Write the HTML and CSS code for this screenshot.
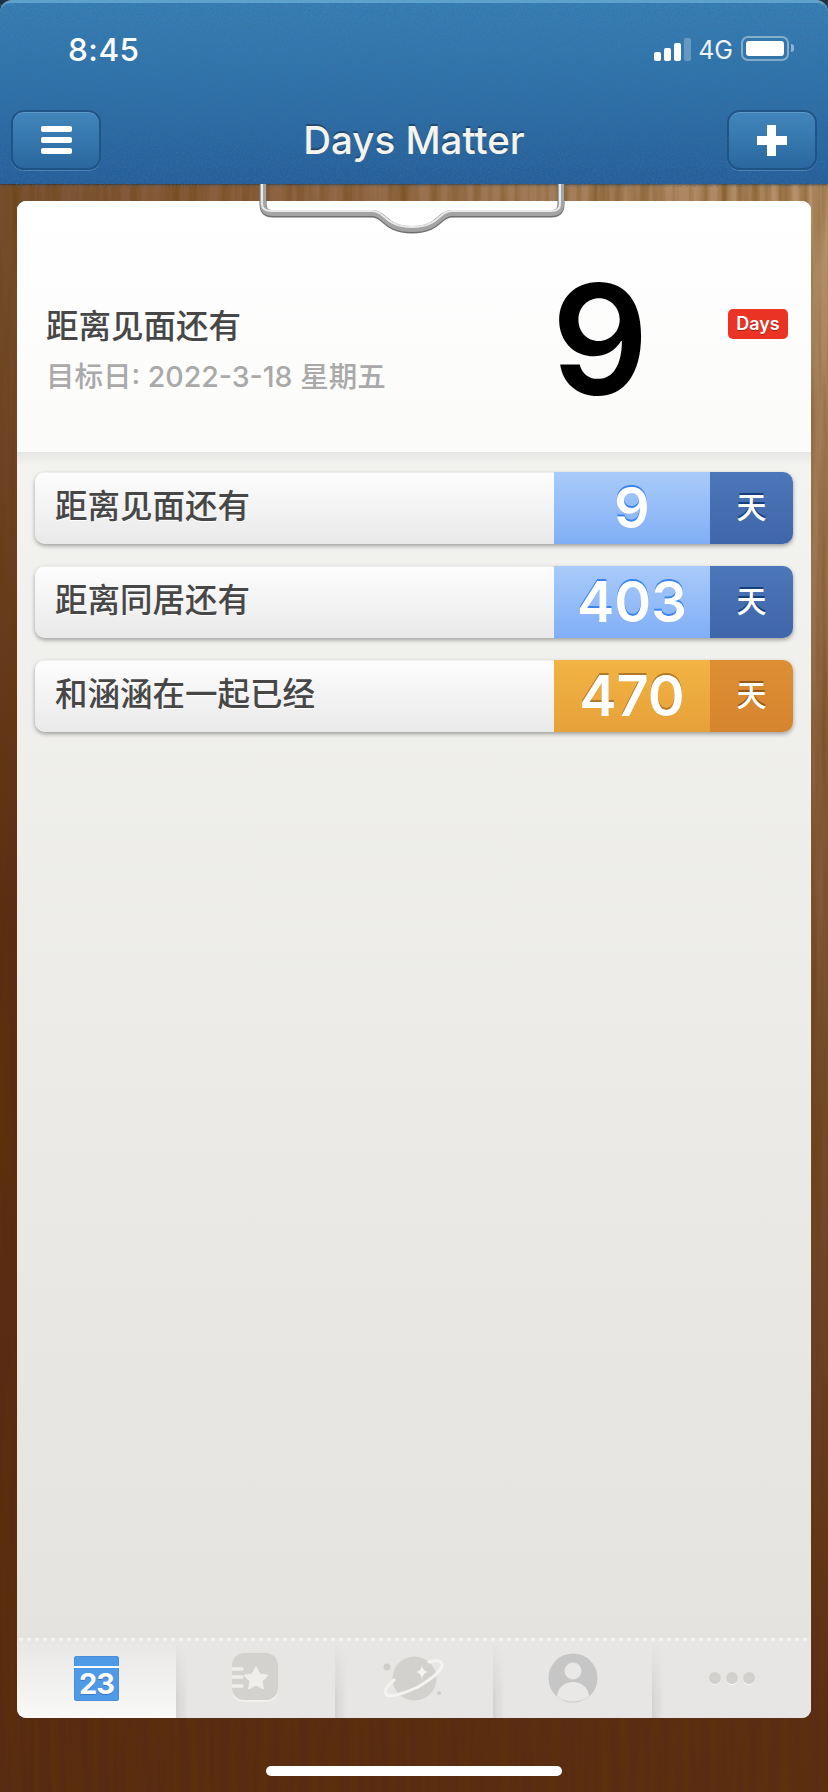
FILE: index.html
```html
<!DOCTYPE html>
<html lang="en">
<head>
  <meta charset="UTF-8">
  <title>Days Matter</title>
  <link rel="stylesheet" href="styles.css">
</head>
<body>
  <div class="screen">

    <!-- wood grain, sits behind everything -->
    <svg class="wood-grain" width="828" height="1792">
      <filter id="grain" x="0" y="0" width="100%" height="100%">
        <feTurbulence type="fractalNoise" baseFrequency="0.1 0.004" numOctaves="3" seed="8"/>
        <feColorMatrix type="matrix" values="0 0 0 0 0.12  0 0 0 0 0.04  0 0 0 0 0  1 0 0 0 -0.36"/>
      </filter>
      <rect width="828" height="1792" filter="url(#grain)"/>
    </svg>

    <header class="header">
      <svg class="header-noise" width="828" height="184">
        <filter id="noise" x="0" y="0" width="100%" height="100%">
          <feTurbulence type="fractalNoise" baseFrequency="0.55" numOctaves="2" seed="3"/>
          <feColorMatrix type="matrix" values="0 0 0 0 0.05  0 0 0 0 0.15  0 0 0 0 0.3  1.5 0 0 0 -0.62"/>
        </filter>
        <rect width="828" height="184" filter="url(#noise)"/>
      </svg>

      <div class="status">
        <span class="time">8:45</span>
        <div class="status-right">
          <div class="signal">
            <i class="bar bar-1"></i><i class="bar bar-2"></i><i class="bar bar-3"></i><i class="bar bar-4"></i>
          </div>
          <span class="network">4G</span>
          <div class="battery"><i class="battery-level"></i></div>
          <i class="battery-tip"></i>
        </div>
      </div>

      <nav class="nav">
        <button class="nav-btn">
          <span class="burger"><i></i><i></i><i></i></span>
        </button>
        <h1 class="nav-title">Days Matter</h1>
        <button class="nav-btn">
          <span class="plus"></span>
        </button>
      </nav>
    </header>

    <svg class="clip" width="340" height="60" viewBox="245 184 340 60">
      <path class="clip-shadow" d="M263 184V204Q263 214 273 214H372C386 214 384 230 412 230C440 230 438 214 452 214H551Q561 214 561 204V184"/>
      <path class="clip-wire" d="M263 184V204Q263 213 273 213H372C386 213 384 229 412 229C440 229 438 213 452 213H551Q561 213 561 204V184"/>
      <path class="clip-shine" d="M262 184V204Q262 211 272 211H372C386 211 384 227 412 227C440 227 438 211 452 211H551Q560 211 560 204V184"/>
    </svg>

    <main class="card">
      <section class="hero">
        <div class="hero-info">
          <div class="hero-title">距离见面还有</div>
          <div class="hero-date">目标日: 2022-3-18 星期五</div>
        </div>
        <div class="hero-number">9</div>
        <div class="badge">Days</div>
      </section>

      <section class="list">
        <div class="row row-blue">
          <div class="row-name">距离见面还有</div>
          <div class="row-num">9</div>
          <div class="row-unit">天</div>
        </div>
        <div class="row row-blue">
          <div class="row-name">距离同居还有</div>
          <div class="row-num">403</div>
          <div class="row-unit">天</div>
        </div>
        <div class="row row-orange">
          <div class="row-name">和涵涵在一起已经</div>
          <div class="row-num">470</div>
          <div class="row-unit">天</div>
        </div>
      </section>

      <footer class="tabs">
        <div class="tab tab-active">
          <div class="cal">
            <div class="cal-top"></div>
            <div class="cal-day">23</div>
          </div>
        </div>
        <div class="tab">
          <svg width="50" height="50" viewBox="0 0 50 50">
            <rect x="2" y="1" width="46" height="48" rx="12" fill="#f2f1ef"/>
            <rect x="2" y="0" width="46" height="47" rx="12" fill="#d3d2cf"/>
            <path d="M3 16h9M3 24h9M3 33h9" stroke="#efeeec" stroke-width="3.500" stroke-linecap="round"/>
            <path d="M26 14.500l3.400 7 7.600 1-5.500 5.200 1.400 7.500-6.900-3.700-6.900 3.700 1.400-7.500-5.500-5.200 7.600-1z" fill="#efeeec" stroke="#efeeec" stroke-width="2" stroke-linejoin="round"/>
          </svg>
        </div>
        <div class="tab">
          <svg width="66" height="54" viewBox="0 0 66 54">
            <circle cx="6" cy="16" r="3.500" fill="#cfcecb"/>
            <circle cx="58" cy="42" r="2" fill="#cfcecb"/>
            <circle cx="33.500" cy="27.500" r="22" fill="#d2d1ce"/>
            <path d="M13 29C6 35 3 40 5 43C8 47 22 43 37 36C50 28 62 20 61 13C60 9 55 9 48 11" fill="none" stroke="#f4f3f1" stroke-width="3" stroke-linecap="round"/>
            <path d="M41 14q1 6 6 7q-5 1-6 7q-1-6-6-7q5-1 6-7z" fill="#f4f3f1"/>
          </svg>
        </div>
        <div class="tab">
          <svg width="50" height="50" viewBox="0 0 50 50">
            <circle cx="25" cy="25" r="24.500" fill="#c6c6c6"/>
            <circle cx="25" cy="18" r="8.500" fill="#e9e8e6"/>
            <path d="M9 43C10 34 17 29 25 29C33 29 40 34 41 43C37 47 31 48.500 25 48.500C19 48.500 13 47 9 43Z" fill="#e9e8e6"/>
          </svg>
        </div>
        <div class="tab">
          <div class="dots"><i></i><i></i><i></i></div>
        </div>
      </footer>
    </main>

    <div class="home-bar"></div>
  </div>
</body>
</html>
```

FILE: styles.css
```css
* {
  box-sizing: border-box;
}

body {
  margin: 0;
  background: #5a2a10;
  font-family: "Inter", "Noto Sans CJK SC", sans-serif;
}

.screen {
  position: relative;
  width: 828px;
  height: 1792px;
  overflow: hidden;
  display: flex;
  flex-direction: column;
  background: linear-gradient(225deg, #b8956e 130px, #8a6040 566px, #7a5233 715px, #5a2d14 1223px, #562a12 1852px);
}

.wood-grain {
  position: absolute;
  left: 0;
  top: 0;
}

/* top bar */
.header {
  position: relative;
  flex: none;
  height: 184px;
  border-radius: 12px 12px 0 0;
  border-top: 3px solid #5da2ca;
  background: linear-gradient(180deg, #3580b6 0%, #2d71aa 50%, #245f9b 100%);
  box-shadow: 0 -12px 0 #1c2f44, 0 1px 2px rgba(0, 0, 0, 0.4);
}

.header-noise {
  position: absolute;
  left: 0;
  top: 0;
}

.status {
  position: relative;
  height: 107px;
  padding: 29px 34px 0 68px;
  display: flex;
  justify-content: space-between;
  color: #fff;
}

.time {
  font-size: 31.500px;
  font-weight: 500;
  line-height: 36px;
  letter-spacing: 0.5px;
}

.status-right {
  display: flex;
  align-items: flex-start;
  height: 36px;
}

.signal {
  display: flex;
  align-items: flex-end;
  gap: 3px;
  height: 23px;
  margin-top: 6px;
}

.bar {
  width: 7px;
  background: #fff;
  border-radius: 2px;
}

.bar-1 { height: 9px; }
.bar-2 { height: 13px; }
.bar-3 { height: 18px; }
.bar-4 { height: 23px; background: rgba(255, 255, 255, 0.25); }

.network {
  margin-left: 7px;
  font-size: 25px;
  line-height: 36px;
  font-weight: 400;
  color: #eef4f8;
}

.battery {
  width: 48px;
  height: 25px;
  margin-left: 8px;
  margin-top: 4px;
  padding: 3px;
  border: 2px solid rgba(255, 255, 255, 0.4);
  border-radius: 7px;
}

.battery-level {
  display: block;
  width: 100%;
  height: 100%;
  background: #fff;
  border-radius: 3px;
}

.battery-tip {
  width: 3px;
  height: 8px;
  margin: 12px 0 0 2px;
  background: rgba(255, 255, 255, 0.45);
  border-radius: 0 3px 3px 0;
}

.nav {
  position: relative;
  display: flex;
  align-items: center;
  justify-content: space-between;
  padding: 0 11px;
}

.nav-btn {
  width: 90px;
  height: 60px;
  padding: 0;
  border: 2px solid #1f5486;
  border-radius: 13px;
  background: linear-gradient(180deg, #4186bc 0%, #2a689f 100%);
  box-shadow: 0 1px 0 rgba(130, 180, 220, 0.4), inset 0 1px 0 rgba(150, 195, 230, 0.35);
  display: flex;
  align-items: center;
  justify-content: center;
}

.burger {
  display: flex;
  flex-direction: column;
  gap: 5px;
  width: 31px;
}

.burger i {
  height: 6px;
  background: #fff;
  border-radius: 2px;
}

.plus {
  width: 30px;
  height: 31px;
  background:
    linear-gradient(#fff, #fff) center / 100% 9px no-repeat,
    linear-gradient(#fff, #fff) center / 9px 100% no-repeat;
}

.nav-title {
  margin: 0;
  font-size: 38.500px;
  font-weight: 500;
  color: #f5f4ec;
  text-shadow: 0 -2px 0 rgba(30, 50, 80, 0.6);
}

/* metal clip on the board */
.clip {
  position: absolute;
  left: 245px;
  top: 184px;
  z-index: 2;
  fill: none;
}

.clip-shadow { stroke: #6e6e6e; stroke-width: 7; }
.clip-wire { stroke: #a4a4a4; stroke-width: 6; }
.clip-shine { stroke: #e9e9e9; stroke-width: 2; }

/* main card */
.card {
  position: relative;
  flex: none;
  height: 1517px;
  margin: 17px 17px 0;
  border-radius: 9px;
  overflow: hidden;
  display: flex;
  flex-direction: column;
  background: linear-gradient(180deg, #f6f6f4 0%, #e3e2de 100%);
}

.hero {
  flex: none;
  height: 251px;
  display: flex;
  align-items: flex-start;
  background: linear-gradient(180deg, #fff 0%, #fbfbfa 100%);
}

.hero-info {
  flex: 1;
  padding: 105px 0 0 29px;
}

.hero-title {
  font-size: 32.500px;
  line-height: 42px;
  font-weight: 500;
  color: #474747;
}

.hero-date {
  margin-top: 11px;
  font-size: 28.500px;
  line-height: 36px;
  font-weight: 500;
  color: #a9a9a9;
}

.hero-number {
  width: 170px;
  margin-top: 47px;
  font-size: 152px;
  line-height: 182px;
  font-weight: 600;
  text-align: center;
  color: #000;
}

.badge {
  width: 60px;
  height: 30px;
  margin: 108px 23px 0 43px;
  background: #ea3323;
  border-radius: 5px;
  color: #fff;
  font-size: 18px;
  font-weight: 600;
  line-height: 29px;
  text-align: center;
  text-shadow: 0 1px 0 rgba(120, 20, 20, 0.6);
}

.list {
  flex: 1;
  padding: 20px 18px;
  display: flex;
  flex-direction: column;
  gap: 22px;
  background: linear-gradient(180deg, rgba(0, 0, 0, 0.05) 0, rgba(0, 0, 0, 0) 14px);
}

.row {
  height: 72px;
  display: flex;
  border-radius: 10px;
  overflow: hidden;
  box-shadow: 0 2px 4px rgba(0, 0, 0, 0.35);
}

.row-name {
  width: 519px;
  padding-left: 20px;
  background: linear-gradient(180deg, #fdfdfd 0%, #e9e9e9 100%);
  border-top: 1px solid #efefef;
  font-size: 32.500px;
  line-height: 68px;
  font-weight: 500;
  color: #474747;
  text-shadow: 0 1px 0 #fff;
}

.row-num {
  width: 156px;
  font-size: 56px;
  line-height: 72px;
  font-weight: 600;
  text-align: center;
  color: #fff;
}

.row-unit {
  flex: 1;
  font-size: 30px;
  line-height: 70px;
  font-weight: 500;
  text-align: center;
  color: #fff;
}

.row-blue .row-num {
  background: linear-gradient(180deg, #a9cbf9 0%, #80aef6 100%);
  text-shadow: 0 -2px 0 #3b84ee;
}

.row-blue .row-unit {
  background: linear-gradient(180deg, #4c77b9 0%, #3f66aa 100%);
  text-shadow: 0 -2px 0 #16407c;
}

.row-orange .row-num {
  background: linear-gradient(180deg, #f2b443 0%, #e6a139 100%);
  text-shadow: 0 -2px 0 #b4782a;
}

.row-orange .row-unit {
  background: linear-gradient(180deg, #de8e33 0%, #d6852f 100%);
  text-shadow: 0 -2px 0 #955a17;
}

/* bottom tabs */
.tabs {
  position: relative;
  flex: none;
  height: 80px;
  display: flex;
}

.tabs::before {
  content: "";
  position: absolute;
  left: 0;
  right: 0;
  top: 0;
  height: 4px;
  background: radial-gradient(circle at 4px 1px, #f3f3f1 1.500px, rgba(255, 255, 255, 0) 2.500px) 0 0 / 8px 4px repeat-x;
  z-index: 1;
}

.tab {
  position: relative;
  flex: 1;
  display: flex;
  align-items: center;
  justify-content: center;
  background: #e7e6e4;
}

/* shadow the previous tab drops on this one, strongest at the bottom */
.tab::after {
  content: "";
  position: absolute;
  left: 0;
  bottom: 0;
  width: 12px;
  height: 76px;
  background: linear-gradient(90deg, rgba(0, 0, 0, 0.08), rgba(0, 0, 0, 0));
  -webkit-mask-image: linear-gradient(180deg, transparent 0%, #000 75%);
  mask-image: linear-gradient(180deg, transparent 0%, #000 75%);
}

.tab-active {
  background: linear-gradient(180deg, #e7e6e4 0%, #f9f9f8 100%);
}

.tab-active::after {
  display: none;
}

.cal {
  width: 45px;
  height: 45px;
  margin-top: 1px;
  background: #4f9ae6;
  border-radius: 3px;
  overflow: hidden;
  box-shadow: inset 0 0 0 1px #4a8fdb;
}

.cal-top {
  height: 12px;
  border-bottom: 2px solid #fff;
}

.cal-day {
  font-size: 29px;
  line-height: 32px;
  font-weight: 700;
  text-align: center;
  color: #fff;
  letter-spacing: -1px;
  text-shadow: 0 1px 0 #3a78c4;
}

.dots {
  display: flex;
  gap: 5px;
}

.dots i {
  width: 12px;
  height: 12px;
  border-radius: 50%;
  background: #d1d0cd;
  box-shadow: 0 1px 0 #f6f5f3;
}

.home-bar {
  position: relative;
  flex: none;
  width: 296px;
  height: 10px;
  margin: 48px auto 0;
  background: #fff;
  border-radius: 5px;
}
```
